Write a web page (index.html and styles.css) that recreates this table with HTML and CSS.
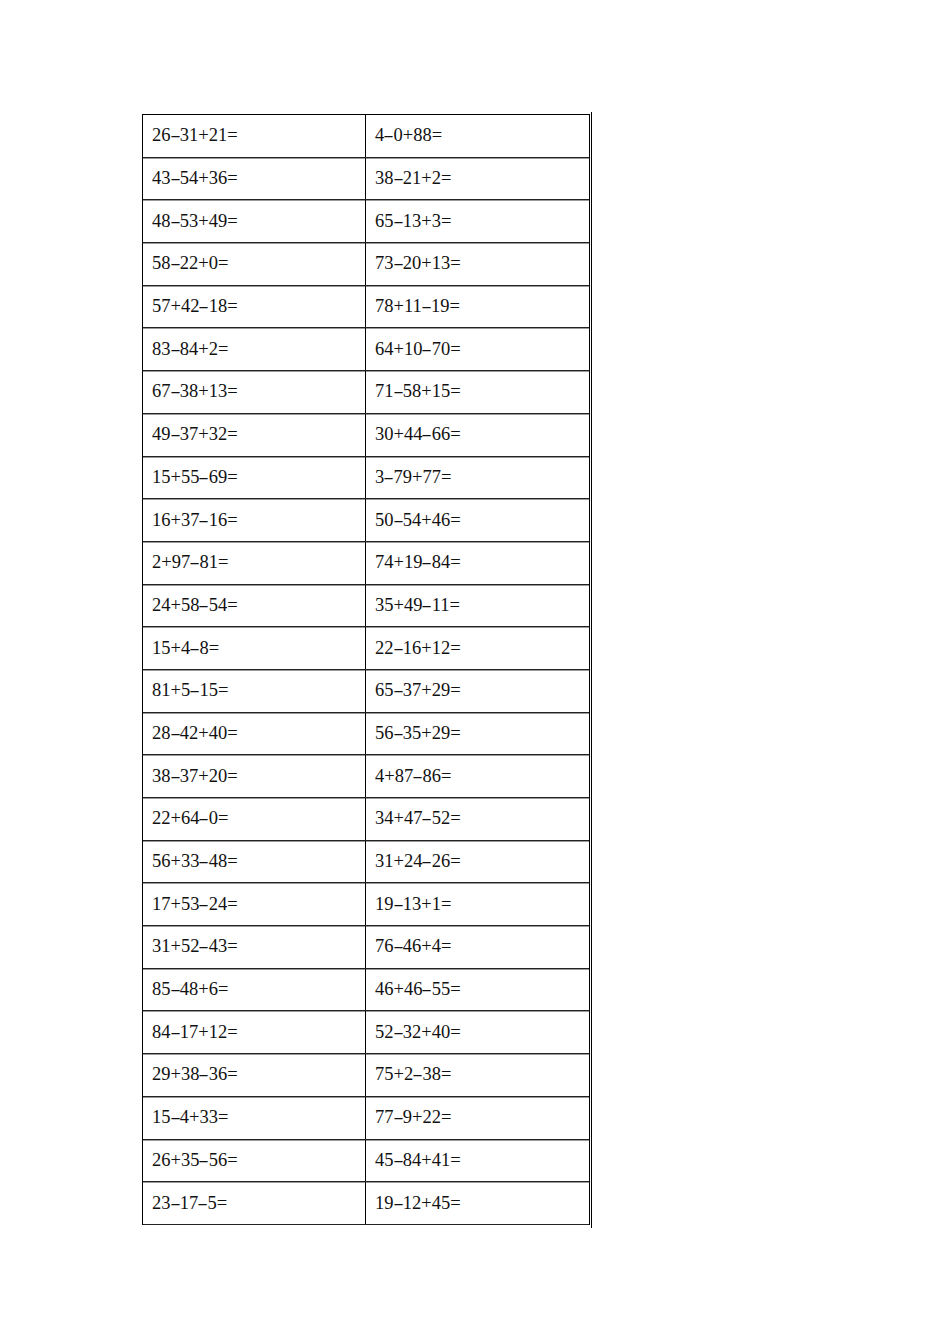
FILE: index.html
```html
<!DOCTYPE html>
<html>
<head>
<meta charset="utf-8">
<link rel="stylesheet" href="styles.css">
</head>
<body>
<div class="page">
  <div class="frame">
    <div class="sheet" id="sheet">
      <div class="row"><div class="cell">26<span class="m">-</span>31+21=</div><div class="cell">4<span class="m">-</span>0+88=</div></div>
      <div class="row"><div class="cell">43<span class="m">-</span>54+36=</div><div class="cell">38<span class="m">-</span>21+2=</div></div>
      <div class="row"><div class="cell">48<span class="m">-</span>53+49=</div><div class="cell">65<span class="m">-</span>13+3=</div></div>
      <div class="row"><div class="cell">58<span class="m">-</span>22+0=</div><div class="cell">73<span class="m">-</span>20+13=</div></div>
      <div class="row"><div class="cell">57+42<span class="m">-</span>18=</div><div class="cell">78+11<span class="m">-</span>19=</div></div>
      <div class="row"><div class="cell">83<span class="m">-</span>84+2=</div><div class="cell">64+10<span class="m">-</span>70=</div></div>
      <div class="row"><div class="cell">67<span class="m">-</span>38+13=</div><div class="cell">71<span class="m">-</span>58+15=</div></div>
      <div class="row"><div class="cell">49<span class="m">-</span>37+32=</div><div class="cell">30+44<span class="m">-</span>66=</div></div>
      <div class="row"><div class="cell">15+55<span class="m">-</span>69=</div><div class="cell">3<span class="m">-</span>79+77=</div></div>
      <div class="row"><div class="cell">16+37<span class="m">-</span>16=</div><div class="cell">50<span class="m">-</span>54+46=</div></div>
      <div class="row"><div class="cell">2+97<span class="m">-</span>81=</div><div class="cell">74+19<span class="m">-</span>84=</div></div>
      <div class="row"><div class="cell">24+58<span class="m">-</span>54=</div><div class="cell">35+49<span class="m">-</span>11=</div></div>
      <div class="row"><div class="cell">15+4<span class="m">-</span>8=</div><div class="cell">22<span class="m">-</span>16+12=</div></div>
      <div class="row"><div class="cell">81+5<span class="m">-</span>15=</div><div class="cell">65<span class="m">-</span>37+29=</div></div>
      <div class="row"><div class="cell">28<span class="m">-</span>42+40=</div><div class="cell">56<span class="m">-</span>35+29=</div></div>
      <div class="row"><div class="cell">38<span class="m">-</span>37+20=</div><div class="cell">4+87<span class="m">-</span>86=</div></div>
      <div class="row"><div class="cell">22+64<span class="m">-</span>0=</div><div class="cell">34+47<span class="m">-</span>52=</div></div>
      <div class="row"><div class="cell">56+33<span class="m">-</span>48=</div><div class="cell">31+24<span class="m">-</span>26=</div></div>
      <div class="row"><div class="cell">17+53<span class="m">-</span>24=</div><div class="cell">19<span class="m">-</span>13+1=</div></div>
      <div class="row"><div class="cell">31+52<span class="m">-</span>43=</div><div class="cell">76<span class="m">-</span>46+4=</div></div>
      <div class="row"><div class="cell">85<span class="m">-</span>48+6=</div><div class="cell">46+46<span class="m">-</span>55=</div></div>
      <div class="row"><div class="cell">84<span class="m">-</span>17+12=</div><div class="cell">52<span class="m">-</span>32+40=</div></div>
      <div class="row"><div class="cell">29+38<span class="m">-</span>36=</div><div class="cell">75+2<span class="m">-</span>38=</div></div>
      <div class="row"><div class="cell">15<span class="m">-</span>4+33=</div><div class="cell">77<span class="m">-</span>9+22=</div></div>
      <div class="row"><div class="cell">26+35<span class="m">-</span>56=</div><div class="cell">45<span class="m">-</span>84+41=</div></div>
      <div class="row"><div class="cell">23<span class="m">-</span>17<span class="m">-</span>5=</div><div class="cell">19<span class="m">-</span>12+45=</div></div>
    </div>
    <div class="outer-line"></div>
  </div>
</div>
</body>
</html>
```

FILE: styles.css
```css
html, body {
  margin: 0;
  padding: 0;
  background: #ffffff;
}

.page {
  width: 950px;
  height: 1344px;
  padding: 112px 0 0 142px;
  box-sizing: border-box;
}

.frame {
  display: flex;
  align-items: stretch;
  gap: 1px;
}

.sheet {
  margin: 2px 0 3px 0;
  width: 448px;
  box-sizing: border-box;
  border-top: 1px solid #000;
  border-left: 1px solid #000;
  border-right: 1px solid #000;
}

.row {
  display: grid;
  grid-template-columns: 223px 1fr;
  height: 42.69px;
  box-sizing: border-box;
  border-bottom: 1px solid #222;
}

.row + .row {
  box-shadow: inset 0 1px 0 #9a9a9a;
}

.cell {
  display: flex;
  align-items: center;
  padding-left: 9px;
  font-family: "Liberation Serif", "Times New Roman", serif;
  font-size: 18.5px;
  color: #111;
  white-space: nowrap;
}

.cell:first-child {
  border-right: 1px solid #000;
}

.m {
  display: inline-block;
  width: 0.5em;
  transform: scaleX(1.7);
  text-align: center;
}

.outer-line {
  width: 1px;
  background: #000;
}
```
